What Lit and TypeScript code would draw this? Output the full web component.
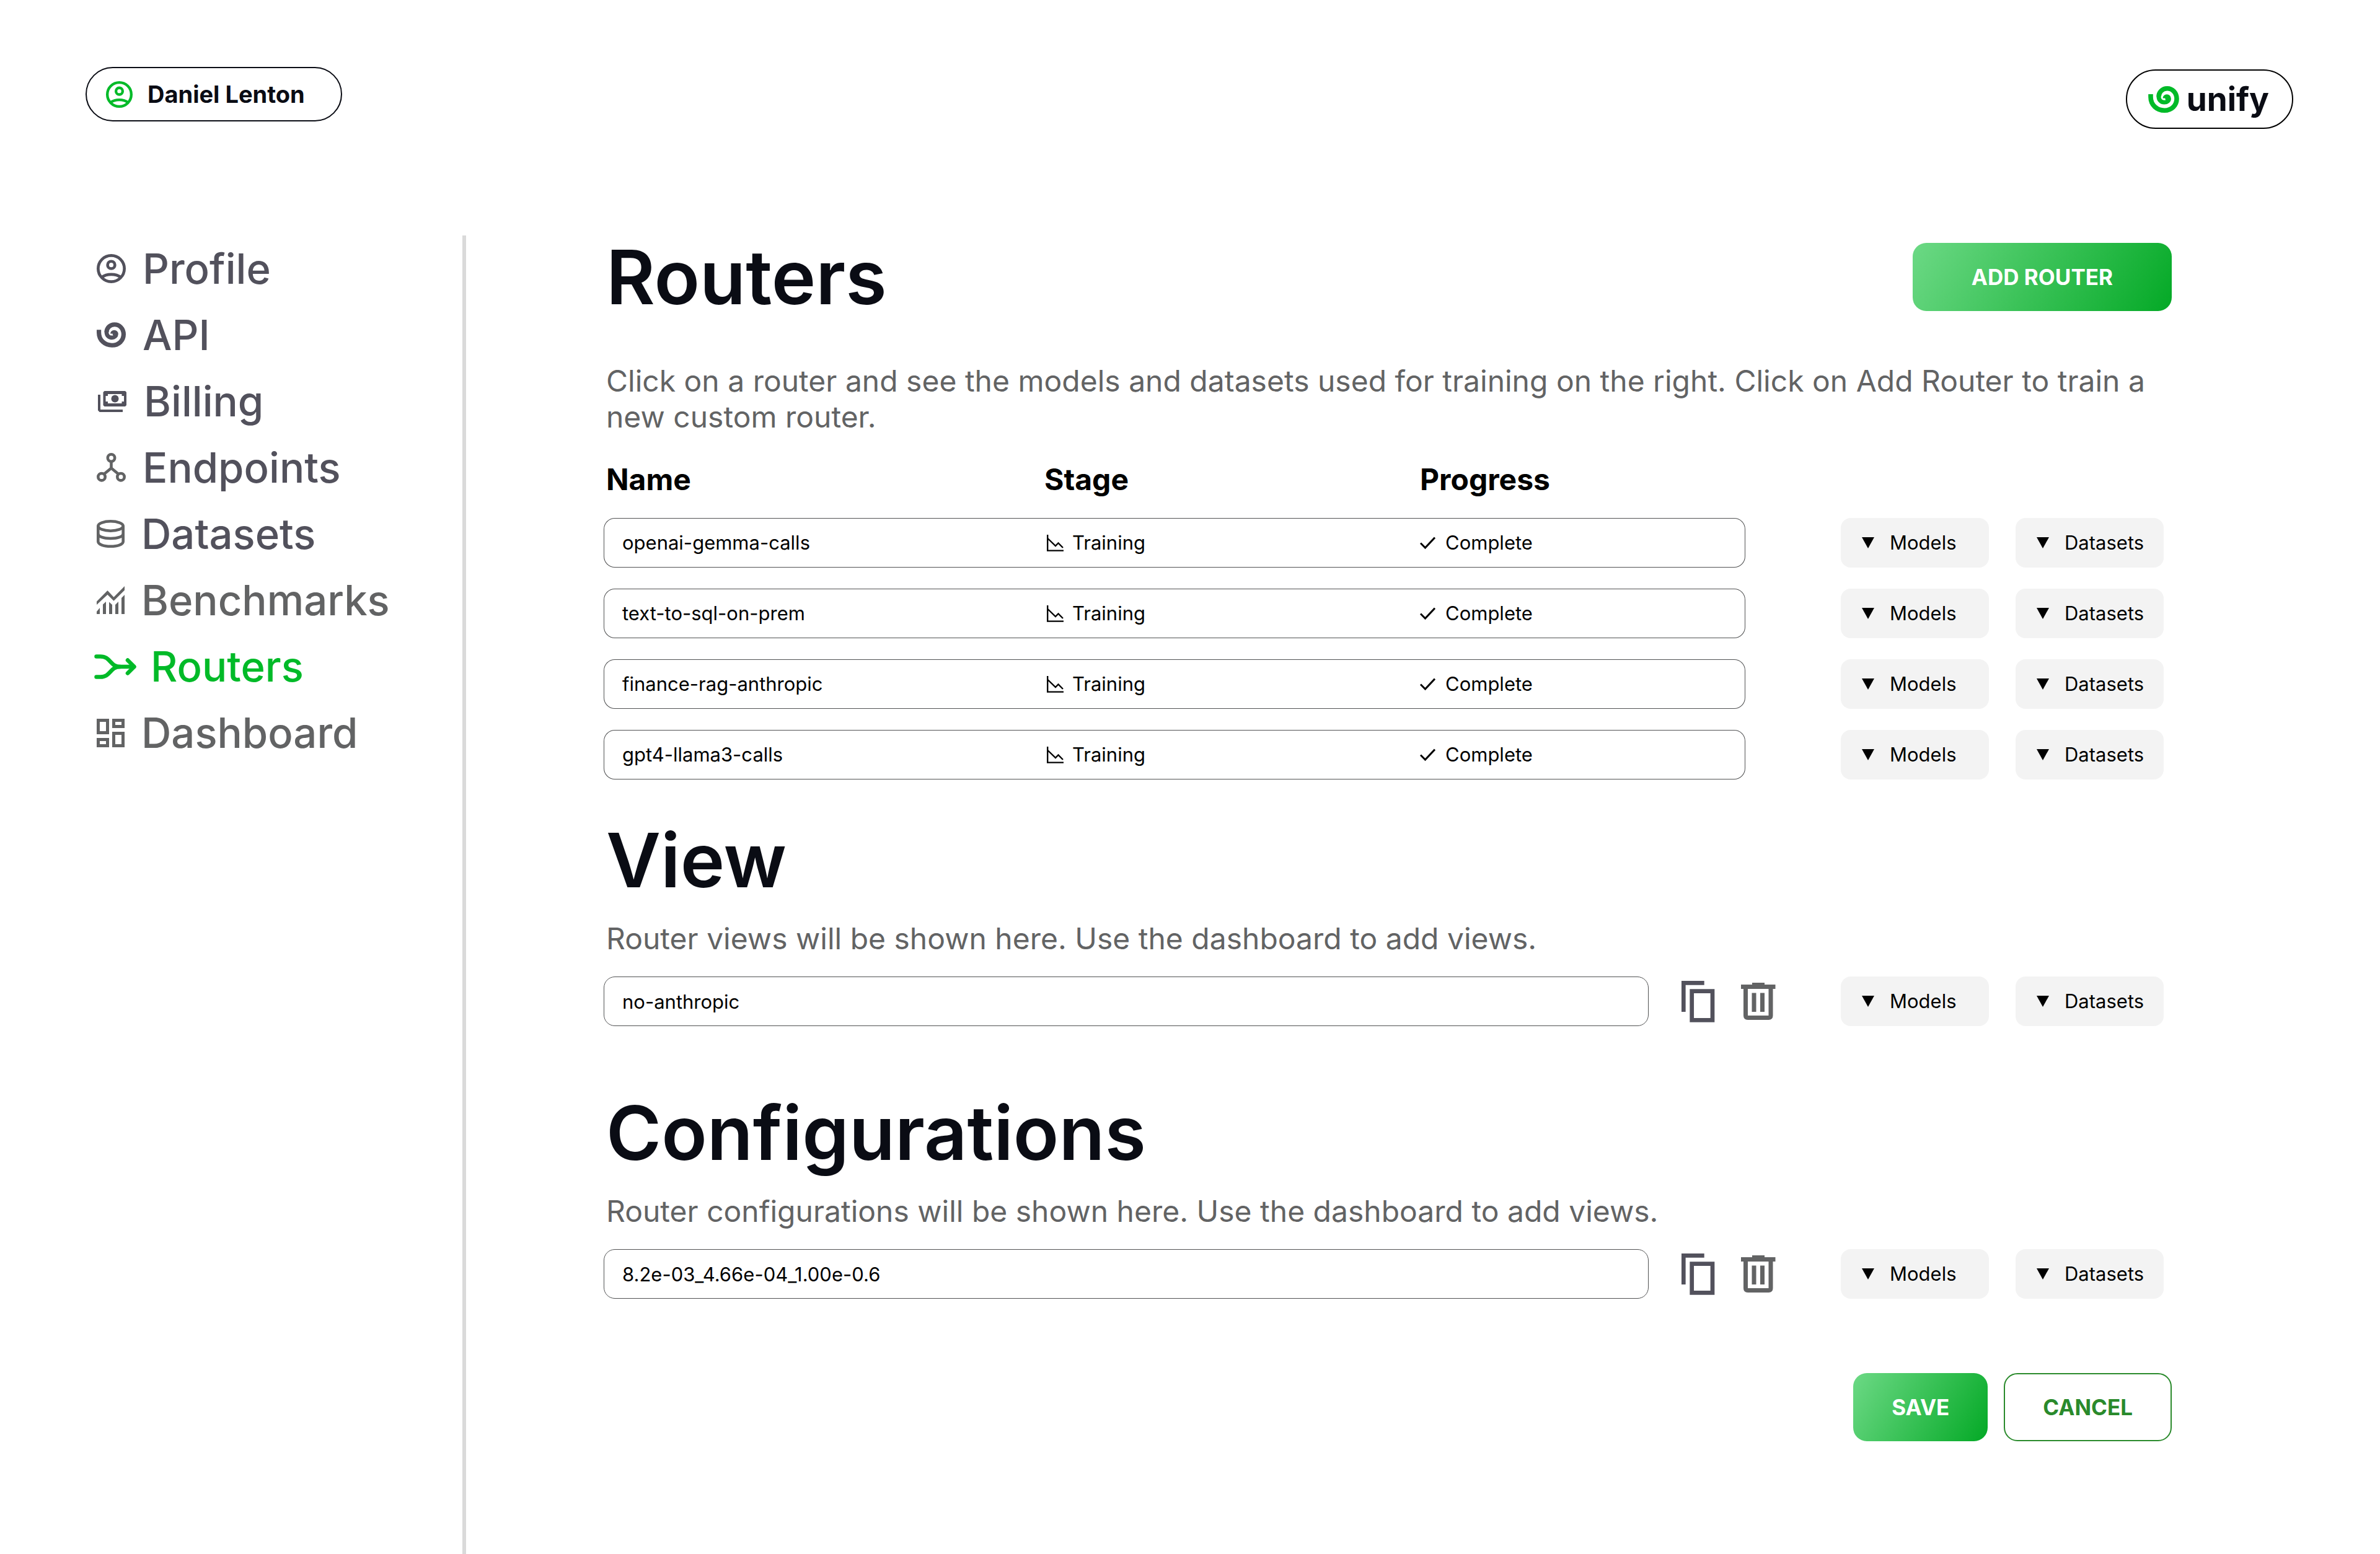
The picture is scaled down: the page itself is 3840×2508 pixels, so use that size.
import { LitElement, html, svg, css, nothing } from "lit";
import type { SVGTemplateResult, TemplateResult } from "lit";
import { customElement, property } from "lit/decorators.js";
import { classMap } from "lit/directives/class-map.js";

interface NavItem {
  label: string;
  icon: TemplateResult;
  tone: "ink" | "grey" | "active";
}

interface Router {
  name: string;
  stage: string;
  progress: string;
}

const personShape: SVGTemplateResult = svg`
  <g fill="none" stroke="currentColor" stroke-width="2">
    <circle cx="12" cy="12" r="9" />
    <circle cx="12" cy="9.5" r="2.5" />
    <path d="M5.3 18 C7.2 16.6 9.5 16 12 16 S16.8 16.6 18.7 18" />
  </g>`;

const spiralShape: SVGTemplateResult = svg`
  <g fill="none" stroke="currentColor">
    <path stroke-width="23" d="M206.5 181 V195 C206.5 235 238 260.500 274 260.500 C309 260.500 333.500 235 333.500 204 C333.500 174 312 153.500 287 153.500 C262 153.500 246 173 246 193" />
    <path stroke-width="21" d="M245.500 190 C245.500 211 258 221 273 221 C287 221 295.500 212 295.500 203 C295.500 197 291 192.500 285 192.500 C280 192.500 276 196 276 201" />
    <circle cx="286" cy="202" r="9" fill="currentColor" stroke="none" />
  </g>`;

const icons = {
  person: html`<svg width="47" height="47" viewBox="2 2 20 20" aria-hidden="true">${personShape}</svg>`,
  userBadge: html`<svg width="43" height="43" viewBox="2 2 20 20" aria-hidden="true">${personShape}</svg>`,
  spiral: html`<svg width="47" height="41" viewBox="195 142 150 130" aria-hidden="true">${spiralShape}</svg>`,
  brandSpiral: html`<svg width="50" height="43" viewBox="195 142 150 130" aria-hidden="true">${spiralShape}</svg>`,
  billing: html`<svg width="49" height="34" viewBox="-2 0 49 34" aria-hidden="true">
    <path fill="currentColor" fill-rule="evenodd" d="M10.500 0 H44 L46 2 V23 L44 25 H10.500 L8.500 23 V2 Z M16 5 V8 H12.500 V17 H16 V20 H38.500 V17 H42 V8 H38.500 V5 Z" />
    <ellipse cx="27.500" cy="12.500" rx="6" ry="6" fill="currentColor" />
    <path fill="none" stroke="currentColor" stroke-width="4" d="M2 6 V30.500 L3.500 32 H40" />
  </svg>`,
  endpoints: html`<svg width="47" height="47" viewBox="0 0 47 47" aria-hidden="true">
    <g fill="none" stroke="currentColor" stroke-width="4.600">
      <circle cx="23.500" cy="8" r="5.700" />
      <circle cx="8" cy="38.700" r="5.700" />
      <circle cx="39" cy="38.700" r="5.700" />
      <path d="M23.500 14 V24.500 M12 34 L23.500 24.500 L35 34" />
    </g>
  </svg>`,
  datasets: html`<svg width="45" height="45" viewBox="0 0 45 45" aria-hidden="true">
    <g fill="none" stroke="currentColor" stroke-width="4.600">
      <ellipse cx="22.500" cy="10" rx="20.200" ry="7.700" />
      <path d="M2.300 10 V35 C2.300 39.500 11 42.700 22.500 42.700 S42.700 39.500 42.700 35 V10" />
      <path d="M2.300 22.500 C2.300 27 11 30 22.500 30 S42.700 27 42.700 22.500" />
    </g>
  </svg>`,
  benchmarks: html`<svg width="45" height="45" viewBox="0 0 45 45" aria-hidden="true">
    <path fill="currentColor" d="M0 24.700 L17.500 7 L27.500 17.700 L45 0 V6.500 L27.500 23.700 L17.500 13.700 L0 30 Z
      M0 41 L5 35 V45 H0 Z M10 29.500 L15 25 V45 H10 Z M20 25.500 L25 30 V45 H20 Z M30 30 L35 25 V45 H30 Z M40 19 L45 14 V45 H40 Z" />
  </svg>`,
  routers: html`<svg class="wide" width="60" height="40" viewBox="4 0 60 40" aria-hidden="true">
    <g fill="none" stroke="currentColor" stroke-width="6.500" stroke-linecap="round" stroke-linejoin="round">
      <path d="M3.500 3.500 H10 C27 3.500 25 20 42 20 H64" />
      <path d="M3.500 36.500 H10 C27 36.500 25 20 42 20" />
      <path d="M54 9.500 L64.500 20 L54 30.500" />
    </g>
  </svg>`,
  dashboard: html`<svg width="45" height="46" viewBox="0 0 45 46" aria-hidden="true">
    <g fill="none" stroke="currentColor" stroke-width="5">
      <path d="M2.500 2.500 H17.500 V22.500 H2.500 Z M27.500 2.500 H42.500 V12.500 H27.500 Z M27.500 23.500 H42.500 V43.500 H27.500 Z M2.500 33.500 H17.500 V43.500 H2.500 Z" />
    </g>
  </svg>`,
  training: html`<svg width="27" height="27" viewBox="0 0 27 27" aria-hidden="true">
    <path fill="none" stroke="currentColor" stroke-width="2.400" d="M1.200 0 V25.600 H27 M1.500 6 L14 18 L18.500 13.500 L26 21" />
  </svg>`,
  check: html`<svg width="25" height="21" viewBox="0 0 25 21" aria-hidden="true">
    <path fill="none" stroke="currentColor" stroke-width="3" d="M1 10.500 L8.500 18 L24 1.500" />
  </svg>`,
  triangle: html`<svg class="tri" width="20" height="18" viewBox="0 0 20 18" aria-hidden="true">
    <path d="M0 0 H20 L10 18 Z" />
  </svg>`,
  copy: html`<svg width="54" height="67" viewBox="0 0 54 67" aria-hidden="true">
    <path fill="none" stroke="currentColor" stroke-width="6.700" d="M36.700 3.300 H3.300 V50 M16.700 16.700 H50 V63.300 H16.700 Z" />
  </svg>`,
  trash: html`<svg width="56" height="60" viewBox="0 0 56 60" aria-hidden="true">
    <path fill="currentColor" fill-rule="evenodd" d="M18 0 H38 V3 H55.500 V10 H51.500 V53 Q51.500 60 44.500 60 H11 Q4 60 4 53 V10 H0 V3 H18 Z M11 10 V53 H44.500 V10 Z M17.500 16.500 H24.500 V47 H17.500 Z M31 16.500 H38 V47 H31 Z" />
  </svg>`,
};

const navItems: NavItem[] = [
  { label: "Profile", icon: icons.person, tone: "ink" },
  { label: "API", icon: icons.spiral, tone: "ink" },
  { label: "Billing", icon: icons.billing, tone: "ink" },
  { label: "Endpoints", icon: icons.endpoints, tone: "ink" },
  { label: "Datasets", icon: icons.datasets, tone: "ink" },
  { label: "Benchmarks", icon: icons.benchmarks, tone: "grey" },
  { label: "Routers", icon: icons.routers, tone: "active" },
  { label: "Dashboard", icon: icons.dashboard, tone: "grey" },
];

const greyIcons = new Set(["Endpoints", "Datasets"]);

const routers: Router[] = [
  { name: "openai-gemma-calls", stage: "Training", progress: "Complete" },
  { name: "text-to-sql-on-prem", stage: "Training", progress: "Complete" },
  { name: "finance-rag-anthropic", stage: "Training", progress: "Complete" },
  { name: "gpt4-llama3-calls", stage: "Training", progress: "Complete" },
];

/** Pair of grey drop-downs that belong to one router, view or configuration. */
@customElement("resource-menus")
export class ResourceMenus extends LitElement {
  @property() owner = "";

  static styles = css`
    :host {
      display: flex;
      gap: 43px;
    }
    .menu {
      display: grid;
      align-items: center;
      width: 239px;
      height: 80px;
    }
    .tri {
      grid-area: 1 / 1;
      margin-left: 34px;
      pointer-events: none;
      z-index: 1;
    }
    .select {
      grid-area: 1 / 1;
      appearance: none;
      width: 100%;
      height: 100%;
      margin: 0;
      border: 0;
      border-radius: 16px;
      padding: 0 0 0 79px;
      background: #f3f3f3;
      color: #000;
      font: 400 31px/40px Inter, sans-serif;
    }
  `;

  render() {
    return ["Models", "Datasets"].map(
      (label) => html`
        <label class="menu">
          ${icons.triangle}
          <select class="select" aria-label="${label} for ${this.owner}">
            <option>${label}</option>
          </select>
        </label>
      `,
    );
  }
}

@customElement("app-root")
export class AppRoot extends LitElement {
  static styles = css`
    :host {
      display: flex;
      flex-direction: column;
      min-height: 100vh;
      background: #fff;
      color: #000;
      font-family: Inter, sans-serif;
    }
    *,
    *::before {
      box-sizing: border-box;
    }
    svg {
      display: block;
      flex: none;
    }
    .header {
      display: flex;
      justify-content: space-between;
      align-items: flex-start;
      height: 380px;
      padding: 108px 140px 0 138px;
    }
    .user,
    .brand {
      display: flex;
      align-items: center;
      border: 2px solid #0a0c14;
      border-radius: 48px;
      background: #fff;
      color: #0a0c14;
    }
    .user {
      gap: 24px;
      height: 88px;
      padding: 0 58px 0 31px;
      font: 700 38px/48px Inter, sans-serif;
    }
    .user svg,
    .brand svg {
      color: #00ba28;
    }
    .brand {
      gap: 12px;
      height: 96px;
      margin-top: 4px;
      padding: 0 37px 0 34px;
      border-color: #000;
      font: 700 53px/64px Inter, sans-serif;
      text-decoration: none;
    }
    .body {
      flex: 1;
      display: grid;
      grid-template-columns: 752px minmax(0, 1fr);
    }
    .side {
      border-right: 6px solid #dadada;
      padding-left: 156px;
    }
    .nav {
      list-style: none;
      margin: 0;
      padding: 0;
    }
    .link {
      display: flex;
      align-items: center;
      gap: 27px;
      height: 107px;
      color: #52515c;
      font-size: 67px;
      line-height: 80px;
      font-weight: 500;
      text-decoration: none;
    }
    .link.grey,
    .link.greyicon svg {
      color: #626364;
    }
    .link.active {
      color: #00ba28;
    }
    .wide {
      overflow: visible;
    }
    .main {
      padding: 7px 336px 80px 222px;
    }
    .head {
      display: flex;
      justify-content: space-between;
      align-items: center;
    }
    .title {
      margin: 0;
      padding-left: 4px;
      color: #0a0c14;
      font-size: 121px;
      line-height: 120px;
      font-weight: 600;
    }
    .lead {
      margin: 0;
      padding-left: 4px;
      color: #626364;
      font-size: 48px;
      line-height: 58px;
      font-weight: 400;
    }
    .intro {
      margin-top: 79px;
    }
    .block {
      padding-right: 13px;
    }
    .view {
      margin-top: 36px;
    }
    .config {
      margin-top: 112px;
    }
    .view .lead,
    .config .lead {
      margin-top: 38px;
    }
    .table {
      width: 100%;
      margin-top: 10px;
      border-collapse: separate;
      border-spacing: 0 34px;
      table-layout: fixed;
    }
    .cstage {
      width: 606px;
    }
    .cprogress {
      width: 525px;
    }
    .cmenus {
      width: 675px;
    }
    th {
      padding: 0;
      text-align: left;
      font-size: 48px;
      line-height: 56px;
      font-weight: 700;
    }
    th:first-child {
      padding-left: 4px;
    }
    td {
      height: 80px;
      padding: 0;
      font-size: 31px;
      line-height: 40px;
    }
    thead td {
      height: auto;
    }
    .cell {
      border: solid #505152;
      border-width: 1px 0;
    }
    .name {
      border-left-width: 1px;
      border-radius: 18px 0 0 18px;
      padding-left: 29px;
    }
    .last {
      border-right-width: 1px;
      border-radius: 0 18px 18px 0;
    }
    .menus {
      padding-left: 154px;
    }
    .status {
      display: flex;
      align-items: center;
      gap: 14px;
      padding-left: 4px;
    }
    .status.done {
      gap: 16px;
      padding-left: 0;
    }
    .entry {
      display: flex;
      align-items: center;
      margin-top: 32px;
    }
    .field {
      flex: 1;
      min-width: 0;
      height: 80px;
      margin: 0;
      border: 1px solid #505152;
      border-radius: 18px;
      padding: 0 29px;
      background: #fff;
      color: #000;
      font: 400 31px/40px Inter, sans-serif;
    }
    .tool {
      border: 0;
      margin: 0 0 0 42px;
      padding: 0;
      background: none;
      color: #626364;
    }
    .tool.copy {
      margin-left: 53px;
      color: #52515c;
    }
    .entry resource-menus {
      margin-left: 105px;
    }
    .btn {
      height: 110px;
      border: 0;
      border-radius: 22px;
      padding: 0 62px;
      background: linear-gradient(120deg, #6cd985, #04a926);
      color: #fff;
      font: 700 35px/44px Inter, sans-serif;
    }
    .btn.add {
      padding: 0 95px;
    }
    .btn.cancel {
      border: 2px solid #2a8a2c;
      padding: 0 61px;
      background: #fff;
      color: #2a8a2c;
    }
    .actions {
      display: flex;
      justify-content: flex-end;
      gap: 26px;
      margin-top: 120px;
    }
  `;

  private entry(value: string, label: string) {
    return html`
      <div class="entry">
        <input class="field" type="text" aria-label=${label} .value=${value} />
        <button class="tool copy" type="button" aria-label="Copy ${value}">${icons.copy}</button>
        <button class="tool" type="button" aria-label="Delete ${value}">${icons.trash}</button>
        <resource-menus owner=${value}></resource-menus>
      </div>
    `;
  }

  render() {
    return html`
      <header class="header">
        <button class="user" type="button">${icons.userBadge}Daniel Lenton</button>
        <a class="brand" href="#home">${icons.brandSpiral}unify</a>
      </header>
      <div class="body">
        <aside class="side">
          <ul class="nav">
            ${navItems.map(
              (item) => html`
                <li>
                  <a
                    class=${classMap({
                      link: true,
                      grey: item.tone === "grey",
                      active: item.tone === "active",
                      greyicon: greyIcons.has(item.label),
                    })}
                    href="#${item.label.toLowerCase()}"
                    aria-current=${item.tone === "active" ? "page" : nothing}
                    >${item.icon}${item.label}</a
                  >
                </li>
              `,
            )}
          </ul>
        </aside>
        <main class="main">
          <div class="head">
            <h1 class="title">Routers</h1>
            <button class="btn add" type="button">ADD ROUTER</button>
          </div>
          <p class="lead intro">
            Click on a router and see the models and datasets used for training on the right. Click
            on Add Router to train a new custom router.
          </p>
          <div class="block">
            <table class="table">
              <colgroup>
                <col />
                <col class="cstage" />
                <col class="cprogress" />
                <col class="cmenus" />
              </colgroup>
              <thead>
                <tr>
                  <th scope="col">Name</th>
                  <th scope="col">Stage</th>
                  <th scope="col">Progress</th>
                  <td></td>
                </tr>
              </thead>
              <tbody>
                ${routers.map(
                  (r) => html`
                    <tr>
                      <td class="cell name">${r.name}</td>
                      <td class="cell"><div class="status">${icons.training}${r.stage}</div></td>
                      <td class="cell last">
                        <div class="status done">${icons.check}${r.progress}</div>
                      </td>
                      <td class="menus"><resource-menus owner=${r.name}></resource-menus></td>
                    </tr>
                  `,
                )}
              </tbody>
            </table>
          </div>
          <section class="block view">
            <h2 class="title">View</h2>
            <p class="lead">Router views will be shown here. Use the dashboard to add views.</p>
            ${this.entry("no-anthropic", "View name")}
          </section>
          <section class="block config">
            <h2 class="title">Configurations</h2>
            <p class="lead">
              Router configurations will be shown here. Use the dashboard to add views.
            </p>
            ${this.entry("8.2e-03_4.66e-04_1.00e-0.6", "Configuration name")}
          </section>
          <div class="actions">
            <button class="btn" type="button">SAVE</button>
            <button class="btn cancel" type="button">CANCEL</button>
          </div>
        </main>
      </div>
    `;
  }
}
